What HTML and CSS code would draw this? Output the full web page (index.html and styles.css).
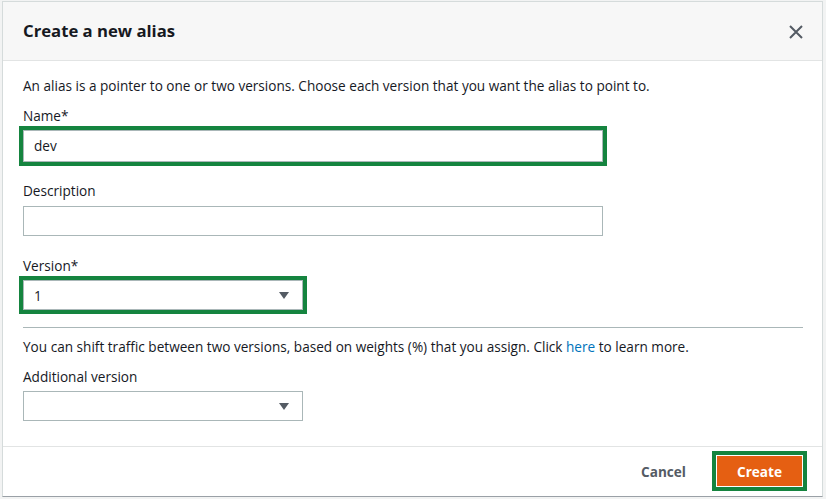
FILE: index.html
```html
<!DOCTYPE html>
<html lang="en">
<head>
<meta charset="utf-8">
<title>Create a new alias</title>
<link rel="stylesheet" href="styles.css">
</head>
<body>
<div class="page">
  <div class="modal">
    <div class="modal-header">
      <h2 class="modal-title">Create a new alias</h2>
      <button class="close-btn" aria-label="Close">
        <svg width="16" height="16" viewBox="0 0 16 16"><path d="M2 2 L14 14 M14 2 L2 14" stroke="#545b64" stroke-width="2" fill="none"/></svg>
      </button>
    </div>
    <div class="modal-body">
      <p class="intro">An alias is a pointer to one or two versions. Choose each version that you want the alias to point to.</p>
      <div class="field">
        <label class="label">Name*</label>
        <div class="input wide highlighted">dev</div>
      </div>
      <div class="field">
        <label class="label">Description</label>
        <div class="input wide"></div>
      </div>
      <div class="field field-version">
        <label class="label">Version*</label>
        <div class="select highlighted"><span>1</span><span class="caret"></span></div>
      </div>
      <hr class="divider">
      <p class="shift">You can shift traffic between two versions, based on weights (%) that you assign. Click <a href="#" class="link">here</a> to learn more.</p>
      <div class="field">
        <label class="label">Additional version</label>
        <div class="select"><span></span><span class="caret"></span></div>
      </div>
    </div>
    <div class="modal-footer">
      <button class="btn-cancel">Cancel</button>
      <button class="btn-create">Create</button>
    </div>
  </div>
</div>
</body>
</html>
```

FILE: styles.css
```css
* { box-sizing: border-box; }
html, body { margin: 0; padding: 0; background: #ffffff; }
body {
  font-family: "Open Sans", Lato, "Liberation Sans", sans-serif;
  font-size: 13.6px;
  color: #16191f;
}
.page {
  width: 826px;
  height: 499px;
  padding: 1px 3px 2px 2px;
  background: #f2f3f3;
}
.modal {
  width: 821px;
  height: 496px;
  background: #ffffff;
  border: 1px solid #d5dbdb;
  border-bottom-color: #9aa0a6;
  display: flex;
  flex-direction: column;
}
.modal-header {
  height: 59px;
  background: #f7f7f7;
  border-bottom: 1px solid #e2e4e4;
  display: flex;
  align-items: center;
  justify-content: space-between;
  padding: 0 20px 0 20px;
}
.modal-title {
  margin: 0;
  font-size: 16.7px;
  font-weight: 700;
  color: #16191f;
  padding-bottom: 2px;
}
.close-btn {
  background: none;
  border: 0;
  padding: 0;
  width: 16px;
  height: 16px;
  margin-right: -2px;
  margin-top: 2px;
  display: flex;
}
.modal-body {
  flex: 1;
  padding: 15px 19px 0 20px;
  border-bottom: 1px solid #e2e4e4;
}
.intro, .shift {
  margin: 0;
  line-height: 20px;
}
.field { display: flex; flex-direction: column; align-items: flex-start; }
.label {
  line-height: 20px;
  margin-top: 10px;
  margin-bottom: 4px;
}
.field + .field .label { margin-top: 19px; margin-bottom: 5px; }
.field + .field-version .label { margin-top: 20px; margin-bottom: 4px; }
.input {
  height: 32px;
  border: 1px solid #aab7b8;
  padding: 0 10px;
  display: flex;
  align-items: center;
  line-height: 20px;
}
.wide { width: 580px; }
.field + .field .input { height: 30px; }
.select {
  width: 280px;
  height: 30px;
  border: 1px solid #aab7b8;
  padding: 0 13px 0 10px;
  display: flex;
  align-items: center;
  justify-content: space-between;
}
.caret {
  width: 0;
  height: 0;
  border-left: 5px solid transparent;
  border-right: 5px solid transparent;
  border-top: 7px solid #545b64;
}
.highlighted {
  outline: 4px solid #15843f;
}
.divider {
  border: 0;
  border-top: 1px solid #aab7b8;
  margin: 17px 0 9px 0;
  width: 780px;
}
.shift + .field .label { margin-top: 10px; }
.link { color: #0073bb; text-decoration: none; }
.modal-footer {
  height: 49px;
  display: flex;
  align-items: center;
  justify-content: flex-end;
  padding: 0 19px 1px 0;
}
.btn-cancel {
  background: none;
  border: 0;
  font-family: inherit;
  font-size: 13.6px;
  font-weight: 700;
  color: #545b64;
  padding: 0;
  margin-right: 30px;
}
.btn-create {
  font-family: inherit;
  font-size: 13.6px;
  font-weight: 700;
  color: #ffffff;
  background: #e55f12;
  border: 1px solid #ffffff;
  outline: 4px solid #15843f;
  width: 87px;
  height: 32px;
  padding: 0;
}
```
